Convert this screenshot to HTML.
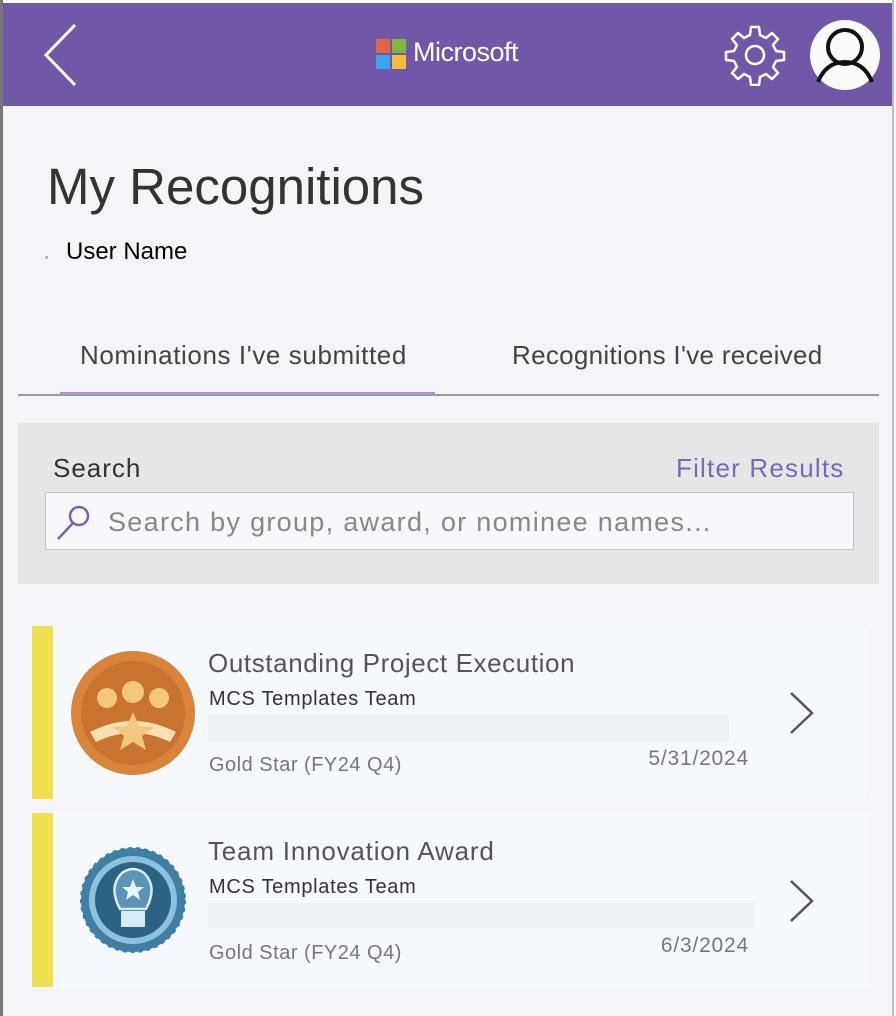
<!DOCTYPE html>
<html><head><meta charset="utf-8"><style>
*{margin:0;padding:0;box-sizing:border-box}
body{width:896px;height:1016px;background:#f3f5f8;font-family:"Liberation Sans",sans-serif;position:relative;overflow:hidden;color:#333}
.abs{position:absolute;white-space:nowrap}
</style></head><body>
<div class="abs" style="left:0;top:0;width:3px;height:1016px;background:#777"></div>
<div class="abs" style="left:892px;top:0;width:2px;height:1016px;background:#bbb"></div>
<div class="abs" style="left:3px;top:0;width:889px;height:3px;background:#fff"></div>
<div class="abs" style="left:3px;top:3px;width:889px;height:103px;background:#7057a8"></div>
<svg class="abs" style="left:40px;top:22px" width="40" height="66"><path d="M35 3 L6 33 L35 63" stroke="#fff" stroke-width="3" fill="none"/></svg>
<div class="abs" style="left:376px;top:39px;width:14px;height:14px;background:#e2663d"></div>
<div class="abs" style="left:392px;top:39px;width:14px;height:14px;background:#7fb93b"></div>
<div class="abs" style="left:376px;top:55px;width:14px;height:14px;background:#3ba4ee"></div>
<div class="abs" style="left:392px;top:55px;width:14px;height:14px;background:#f3bd3b"></div>
<div class="abs" style="left:413px;top:37px;font-size:27px;color:#fff;letter-spacing:-0.5px">Microsoft</div>
<svg class="abs" style="left:724px;top:24px" width="62" height="62" viewBox="0 0 62 62"><path d="M27 3h8l1 8 6 3 6-5 6 6-5 6 3 6 8 1v8l-8 1-3 6 5 6-6 6-6-5-6 3-1 8h-8l-1-8-6-3-6 5-6-6 5-6-3-6-8-1v-8l8-1 3-6-5-6 6-6 6 5 6-3z" fill="none" stroke="#fff" stroke-width="2.5" stroke-linejoin="round"/><circle cx="31" cy="31" r="9" fill="none" stroke="#fff" stroke-width="2.5"/></svg>
<svg class="abs" style="left:808px;top:18px" width="74" height="74" viewBox="0 0 74 74"><circle cx="37" cy="37" r="35" fill="#fafafa"/><circle cx="37" cy="29" r="17" fill="none" stroke="#111" stroke-width="4"/><path d="M10 64 Q18 44 37 44 Q56 44 64 64" fill="none" stroke="#111" stroke-width="4"/></svg>
<div class="abs" style="left:47px;top:157px;font-size:51px;color:#333">My Recognitions</div>
<div class="abs" style="left:45px;top:256px;width:3px;height:3px;background:#bbb"></div>
<div class="abs" style="left:66px;top:238px;font-size:24px;color:#000">User Name</div>
<div class="abs" style="left:80px;top:340px;font-size:26px;color:#444;letter-spacing:0.6px">Nominations I've submitted</div>
<div class="abs" style="left:512px;top:340px;font-size:26px;color:#444;letter-spacing:0.3px">Recognitions I've received</div>
<div class="abs" style="left:18px;top:394px;width:861px;height:2px;background:#9a9a9a"></div>
<div class="abs" style="left:60px;top:392px;width:375px;height:3px;background:#a596cf"></div>
<div class="abs" style="left:18px;top:423px;width:861px;height:161px;background:#e6e6e7"></div>
<div class="abs" style="left:53px;top:453px;font-size:26px;color:#333;letter-spacing:1px">Search</div>
<div class="abs" style="left:676px;top:453px;font-size:26px;color:#7c69b5;letter-spacing:1.2px">Filter Results</div>
<div class="abs" style="left:45px;top:492px;width:809px;height:58px;background:#f6f8fb;border:1px solid #c4c4c4"></div>
<svg class="abs" style="left:54px;top:503px" width="40" height="40"><circle cx="25" cy="13" r="9" fill="none" stroke="#7c5fb8" stroke-width="2.5"/><path d="M19 20 L4 36" stroke="#7c5fb8" stroke-width="2.5"/></svg>
<div class="abs" style="left:108px;top:507px;font-size:27px;color:#888;letter-spacing:1.3px">Search by group, award, or nominee names...</div>

<div class="abs" style="left:32px;top:626px;width:835px;height:173px;background:#f5f8fc"></div>
<div class="abs" style="left:32px;top:626px;width:21px;height:173px;background:#f0df4e"></div>
<svg class="abs" style="left:70px;top:650px" width="126" height="126" viewBox="0 0 126 126"><circle cx="63" cy="63" r="62" fill="#d9843a"/><circle cx="63" cy="63" r="52" fill="#c97330"/><circle cx="37" cy="48" r="10" fill="#f4c77e"/><circle cx="63" cy="42" r="11" fill="#f4c77e"/><circle cx="89" cy="48" r="10" fill="#f4c77e"/><path d="M20 82 Q63 60 106 82 L100 92 Q63 74 26 92z" fill="#f6dfb3"/><path d="M63 62 L69 76 L84 77 L72 86 L76 100 L63 92 L50 100 L54 86 L42 77 L57 76z" fill="#f4c77e"/></svg>
<div class="abs" style="left:208px;top:648px;font-size:26px;color:#555;letter-spacing:0.6px">Outstanding Project Execution</div>
<div class="abs" style="left:209px;top:688px;font-size:20px;color:#333;letter-spacing:0.7px">MCS Templates Team</div>
<div class="abs" style="left:208px;top:715px;width:521px;height:27px;background:#eef1f4"></div>
<div class="abs" style="left:209px;top:754px;font-size:20px;color:#777;letter-spacing:0.5px">Gold Star (FY24 Q4)</div>
<div class="abs" style="right:147px;top:747px;font-size:21px;color:#777;letter-spacing:0.8px">5/31/2024</div>
<svg class="abs" style="left:788px;top:690px" width="28" height="46"><path d="M3 3 L24 23 L3 43" fill="none" stroke="#555" stroke-width="2.5"/></svg>

<div class="abs" style="left:32px;top:813px;width:835px;height:174px;background:#f5f8fc"></div>
<div class="abs" style="left:32px;top:813px;width:21px;height:174px;background:#f0df4e"></div>
<svg class="abs" style="left:80px;top:847px" width="106" height="106" viewBox="0 0 106 106"><circle cx="53" cy="53" r="52" fill="#3f7fa6" stroke="#3f7fa6" stroke-width="2" stroke-dasharray="4 4"/><circle cx="53" cy="53" r="44" fill="#8cc2de"/><circle cx="53" cy="53" r="38" fill="#2e6283"/><path d="M40 62 Q28 40 42 26 Q53 18 64 26 Q78 40 66 62z" fill="#5c94b8" stroke="#d8ecf6" stroke-width="2.5"/><rect x="41" y="64" width="24" height="16" fill="#d8ecf6"/><path d="M53 32 L56 40 L64 40 L58 45 L60 53 L53 48 L46 53 L48 45 L42 40 L50 40z" fill="#eaf5fb"/></svg>
<div class="abs" style="left:208px;top:836px;font-size:26px;color:#555;letter-spacing:0.8px">Team Innovation Award</div>
<div class="abs" style="left:209px;top:876px;font-size:20px;color:#333;letter-spacing:0.7px">MCS Templates Team</div>
<div class="abs" style="left:208px;top:903px;width:547px;height:25px;background:#eef1f4"></div>
<div class="abs" style="left:209px;top:942px;font-size:20px;color:#777;letter-spacing:0.5px">Gold Star (FY24 Q4)</div>
<div class="abs" style="right:147px;top:934px;font-size:21px;color:#777;letter-spacing:0.8px">6/3/2024</div>
<svg class="abs" style="left:788px;top:878px" width="28" height="46"><path d="M3 3 L24 23 L3 43" fill="none" stroke="#555" stroke-width="2.5"/></svg>
</body></html>
